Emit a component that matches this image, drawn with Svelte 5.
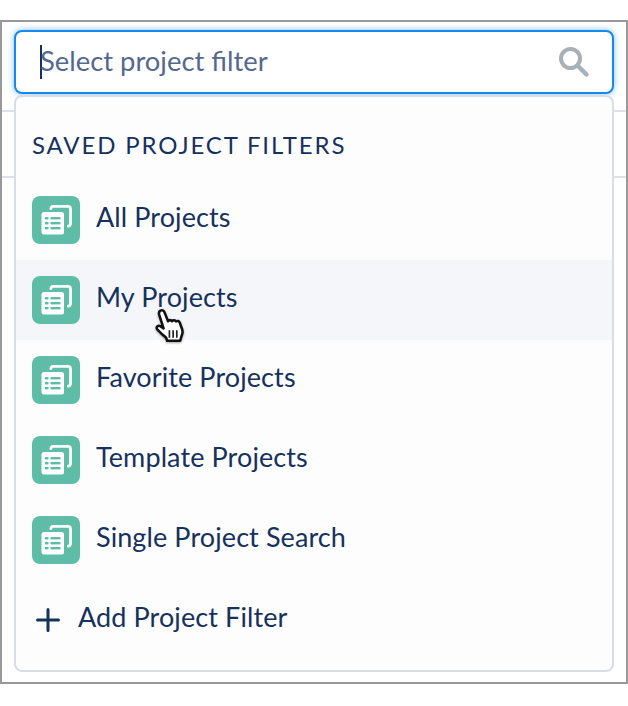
<script>
  const filters = [
    { name: 'All Projects' },
    { name: 'My Projects', hover: true },
    { name: 'Favorite Projects' },
    { name: 'Template Projects' },
    { name: 'Single Project Search' }
  ];
</script>

<div class="frame">
  <div class="search">
    <span class="caret"></span>
    <span class="placeholder">Select project filter</span>
    <svg class="search-icon" width="32" height="32" viewBox="0 0 32 32" fill="none" stroke="#a8b0b8">
      <circle cx="12.5" cy="12.5" r="9.5" stroke-width="4" />
      <path d="M19.5 19.5 L28.5 28.5" stroke-width="4.4" stroke-linecap="round" />
    </svg>
  </div>

  <div class="dropdown">
    <h2 class="heading">SAVED PROJECT FILTERS</h2>
    {#each filters as filter}
      <div class="row" class:hover={filter.hover}>
        <span class="badge">
          <svg width="32" height="32" viewBox="0 0 32 32">
            <path d="M10.8 4.6a2.8 2.8 0 0 1 2.7-2.2h14.3a2.7 2.7 0 0 1 2.7 2.7v14.4a2.8 2.8 0 0 1-2.2 2.7" fill="none" stroke="#fff" stroke-width="2.8" stroke-linecap="round" />
            <rect x="1.5" y="8" width="22.5" height="22.5" rx="2.5" fill="#fff" />
            <g fill="#5fbca7">
              <rect x="5" y="13" width="3.5" height="2.4" />
              <rect x="10.5" y="13" width="10" height="2.4" />
              <rect x="5" y="18" width="3.5" height="2.4" />
              <rect x="10.5" y="18" width="10" height="2.4" />
              <rect x="5" y="23" width="3.5" height="2.4" />
              <rect x="10.5" y="23" width="10" height="2.4" />
            </g>
          </svg>
        </span>
        <span class="label">{filter.name}</span>
      </div>
    {/each}
    <div class="row add">
      <svg class="plus" width="24" height="24" viewBox="0 0 24 24">
        <path d="M12 1.5v21M1.5 12h21" stroke="#16325c" stroke-width="3" stroke-linecap="round" />
      </svg>
      <span class="label">Add Project Filter</span>
    </div>

    <svg class="cursor" width="34" height="36" viewBox="0 0 32 34">
      <path d="M6 2.5c1.6-1 3.2-.2 3.8 1.4l3.4 8.6c.9-1.4 2.8-1.4 3.8-.1 1-1.2 2.9-1.1 3.7.3 1.2-.9 2.9-.4 3.5 1l2.3 6.4c.9 2.7.4 4.6-.6 6.4l-1.2 4.4H12.4l-1-2.8C8.5 25.4 5 22.5 3 20c-1.4-2 .8-4 2.8-2.8l3.2 2L4.8 6.2c-.4-1.5 0-2.9 1.2-3.7z" fill="#fff" stroke="#111" stroke-width="2.4" stroke-linejoin="round" />
      <path d="M14.5 21v7M18 21v7M21.5 21v7" stroke="#222" stroke-width="1.6" />
    </svg>
  </div>
</div>

<style>
  :global(body) {
    margin: 0;
    background: #fff;
    font-family: Lato, "Open Sans", sans-serif;
    color: #16325c;
  }
  .frame {
    box-sizing: border-box;
    width: 628px;
    height: 664px;
    margin-top: 20px;
    padding: 8px 12px;
    border: 2px solid #999;
    background-color: #fff;
    /* table lines showing behind the dropdown */
    background-image:
      linear-gradient(#dde1e9, #dde1e9),
      linear-gradient(#dde1e9, #dde1e9);
    background-size: 100% 2px;
    background-position: 0 88px, 0 154px;
    background-repeat: no-repeat;
  }
  .search {
    box-sizing: border-box;
    height: 64px;
    display: flex;
    align-items: center;
    position: relative;
    padding: 0 24px;
    background: #fff;
    border: 2px solid #1589ee;
    border-radius: 8px;
    box-shadow: 0 0 6px #1589ee88;
  }
  .caret {
    width: 2px;
    height: 34px;
    background: #16325c;
    flex: none;
  }
  .placeholder {
    flex: 1;
    margin-left: -2px;
    padding-bottom: 4px;
    font-size: 27.4px;
    color: #54698d;
  }
  .search-icon {
    flex: none;
    margin-right: -2px;
  }
  .dropdown {
    box-sizing: border-box;
    position: relative;
    height: 577px;
    margin-top: 1px;
    padding-top: 3px;
    background: #fdfdfe;
    border: 2px solid #d8dde6;
    border-radius: 8px;
  }
  .heading {
    margin: 0;
    padding: 30px 16px 0;
    height: 80px;
    box-sizing: border-box;
    font-size: 24px;
    font-weight: 400;
    letter-spacing: 1.85px;
    line-height: 30px;
  }
  .row {
    height: 80px;
    display: flex;
    align-items: center;
    gap: 16px;
    padding: 0 16px;
  }
  .row.hover {
    background: #f4f6f9;
  }
  .badge {
    width: 48px;
    height: 48px;
    flex: none;
    display: flex;
    align-items: center;
    justify-content: center;
    background: #5fbca7;
    border-radius: 8px;
  }
  .label {
    padding-bottom: 6px;
    font-size: 27px;
    letter-spacing: 0.1px;
    line-height: 32px;
  }
  .add {
    gap: 18px;
    padding-left: 20px;
  }
  .plus {
    flex: none;
  }
  .cursor {
    position: absolute;
    left: 138px;
    top: 211px;
    filter: drop-shadow(0 1px 1px rgba(0, 0, 0, 0.35));
  }
</style>
